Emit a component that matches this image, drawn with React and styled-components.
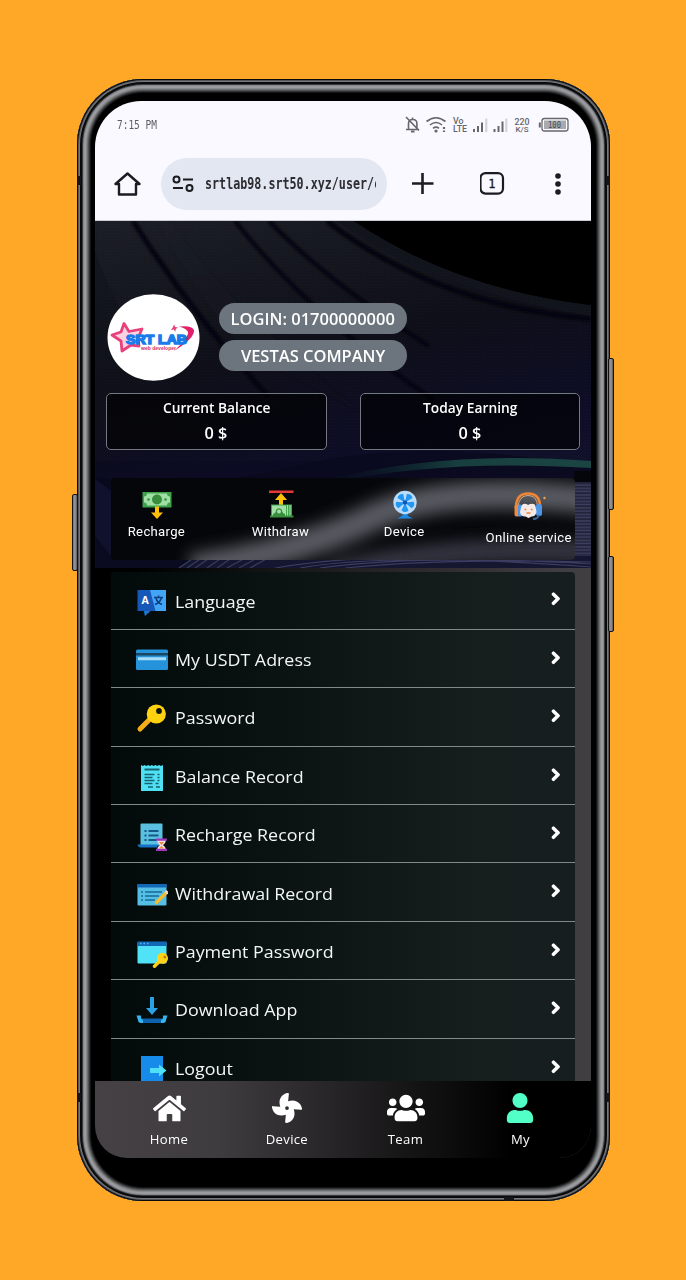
import React from "react";
import styled, { createGlobalStyle } from "styled-components";
import { FaChevronRight, FaFan, FaHome, FaUser, FaUsers } from "react-icons/fa";

const Global = createGlobalStyle`
  * { box-sizing: border-box; }
  body { margin: 0; background: #ffa726; font-family: "Open Sans", "Noto Sans", sans-serif; }
`;

const Page = styled.main`
  height: 1280px;
  padding: 79px 0 0 77px;
  background: #ffa726;
  overflow: hidden;
`;

const Phone = styled.div`
  position: relative;
  width: 533px;
  height: 1122px;
  padding: 22px 19px 43px 18px;
  border-radius: 66px;
  background: #000;
  box-shadow: inset 0 0 0 1px #0b0b0b, inset 0 0 0 2px #55565a, inset 0 0 0 3px #77787b,
    inset 0 0 0 5px #0a0a0b, inset 0 0 0 6px #3c3c40, inset 0 0 0 7px #85878a,
    inset 0 0 0 9px #9a9b9d, inset 0 0 0 10px #88898b, inset 0 0 0 11px #6d6e70,
    inset 0 0 0 12px #505153, inset 0 0 0 13px #303133, inset 0 0 0 14px #151515;
`;

const SideButton = styled.i`
  position: absolute;
  top: ${(p) => p.$top}px;
  ${(p) => p.$side}: ${(p) => (p.$side === "left" ? -5 : -4)}px;
  width: 6px;
  height: ${(p) => p.$height}px;
  border: 1px solid #151210;
  border-radius: 2px;
  background: linear-gradient(90deg, #77777b, #9a9a9d, #56565a);
`;

const AntennaGap = styled.i`
  position: absolute;
  background: #141517;
  top: ${(p) => p.$top}px;
  left: ${(p) => p.$left}px;
  width: ${(p) => p.$w || 4}px;
  height: ${(p) => p.$h || 9}px;
`;

const Screen = styled.div`
  display: flex;
  flex-direction: column;
  height: 1057px;
  overflow: hidden;
  border-radius: 46px 46px 32px 32px;
  background: linear-gradient(90deg, #000 0%, #000 8%, #413e41 94%, #413e41 100%);
`;

const Label = styled.span`
  display: inline-block;
  flex: none;
  color: ${(p) => p.$color || "#fff"};
  font-family: ${(p) => p.$font || '"Open Sans", "Noto Sans", sans-serif'};
  font-size: ${(p) => p.$size}px;
  font-weight: ${(p) => p.$weight || 400};
  line-height: ${(p) => p.$lh || 20}px;
  letter-spacing: ${(p) => p.$ls || 0}px;
  white-space: pre;
  transform: scaleX(${(p) => p.$sx || 1});
  transform-origin: ${(p) => p.$origin || "center"};
`;

const BrowserHeader = styled.header`
  flex: none;
  height: 120px;
  background: #faf9ff;
  border-bottom: 1px solid #c9cdd2;
`;

const StatusBar = styled.div`
  display: flex;
  align-items: center;
  justify-content: space-between;
  height: 48px;
  padding: 0 22px;
`;

const Toolbar = styled.div`
  display: flex;
  align-items: center;
  height: 69px;
  padding-left: 19px;
`;

const AddressBar = styled.div`
  display: flex;
  align-items: center;
  width: 226px;
  height: 52px;
  margin: 0 24px 0 19px;
  padding-left: 11px;
  border-radius: 26px;
  background: #e2e7f1;
`;

const UrlClip = styled.div`
  width: 171px;
  height: 24px;
  margin-left: 11px;
  overflow: hidden;
`;

const Hero = styled.section`
  position: relative;
  flex: none;
  height: 347px;
  padding: 73px 11px 0;
  isolation: isolate;
`;

const Backdrop = styled.svg`
  position: absolute;
  inset: 0;
  z-index: -1;
`;

const Profile = styled.div`
  display: flex;
  height: 87px;
  padding-left: 1px;
`;

const Pills = styled.div`
  display: flex;
  flex-direction: column;
  gap: 6px;
  margin: 9px 0 0 19px;
`;

const Pill = styled.div`
  display: flex;
  align-items: center;
  justify-content: center;
  width: 188px;
  height: 31px;
  border-radius: 16px;
  background: #6c757d;
`;

const Balances = styled.div`
  display: flex;
  justify-content: space-between;
  margin-top: 12px;
`;

const BalanceCard = styled.div`
  display: flex;
  flex-direction: column;
  align-items: center;
  width: 220.5px;
  height: 57px;
  padding-top: 4px;
  border: 1px solid #747881;
  border-radius: 5px;
  background: rgba(0, 0, 0, 0.6);
`;

const Shortcuts = styled.div`
  position: relative;
  height: 82px;
  margin: 28px 5px 0;
  border-radius: 4px;
  background: #050609;
`;

const Sheen = styled.svg`
  position: absolute;
  inset: 0;
  border-radius: 4px;
`;

const ShortcutGrid = styled.div`
  position: relative;
  display: grid;
  grid-template-columns: repeat(4, 124px);
  margin: 0 -16.5px;
  padding-top: 12px;
`;

const Shortcut = styled.div`
  display: flex;
  flex-direction: column;
  align-items: center;
  gap: ${(p) => p.$gap || 1}px;
`;

const Menu = styled.section`
  flex: 1;
  min-height: 0;
  margin: 3.5px 16.5px 0 16px;
  overflow: hidden;
  border-radius: 4px 4px 0 0;
  background: linear-gradient(90deg, #030a0a 0%, #0b1413 40%, #161f1e 80%, #161e1f 100%);
`;

const MenuRow = styled.div`
  display: flex;
  align-items: center;
  height: 58.4px;
  padding: 3px 12px 0 25px;
  border-bottom: 1px solid #838988;

  & > svg:first-child { flex: none; margin-right: 6.5px; }
`;

const Chevron = styled(FaChevronRight)`
  margin: -5px 0 0 auto;
  color: #fff;
  stroke: #fff;
  stroke-width: 50px;
  overflow: visible;
`;

const TabBar = styled.nav`
  display: flex;
  flex: none;
  height: 77px;
  padding: 12px 0 0 14px;
  background: linear-gradient(90deg, #454145 0%, #3f3c3f 25%, #000 84%);
`;

const Tab = styled.div`
  display: flex;
  flex-direction: column;
  align-items: center;
  gap: 6px;
  width: ${(p) => p.$w}px;
  color: ${(p) => p.$color || "#fff"};
`;

const MONO = '"DejaVu Sans Mono", monospace';
const ROBOTO = 'Roboto, "Open Sans", sans-serif';

function StatusIcons() {
  return (
    <svg width="164" height="20" viewBox="0 0 164 20" fill="none" stroke="#66666b">
      <g strokeWidth="1.6">
        <path d="M3.5 14V8.500q0-4 4.200-4t4.200 4V14M1 14.500h13M1 2l13 13.500M7.600 4.500V2.500" />
        <path d="M6 16.500h3.500" strokeWidth="2" />
        <path d="M21.500 6.500q9.500-7.500 19 0M25 10q6-5 12 0M28 13.300q3-2.500 6 0" />
      </g>
      <circle cx="31" cy="16" r="1.600" fill="#66666b" stroke="none" />
      <path d="M39 12v2M39 15.500v1.500" strokeWidth="2.200" />
      <g fill="#66666b" stroke="none" fontFamily="Roboto, sans-serif" fontWeight="500">
        <text x="48" y="8.500" fontSize="8.500" textLength="10.500" lengthAdjust="spacingAndGlyphs">Vo</text>
        <text x="48" y="17" fontSize="8.500" textLength="14" lengthAdjust="spacingAndGlyphs">LTE</text>
        <text x="109.500" y="9.500" fontSize="9" textLength="15" lengthAdjust="spacingAndGlyphs">220</text>
        <text x="110.500" y="17" fontSize="7" textLength="13" lengthAdjust="spacingAndGlyphs">K/S</text>
      </g>
      <g strokeWidth="2">
        <path d="M69 14v3M73 11v6M77 7.500v9.500M89.500 14v3M93.500 11v6M97.500 6.500v10.500" />
        <path d="M81.300 3.500v13.500M101.300 3.500v13.500" stroke="#d0d0d5" />
      </g>
      <rect x="137" y="3.500" width="26" height="12.500" rx="2.500" strokeWidth="1.300" />
      <rect x="139" y="5.500" width="22" height="8.500" fill="#aaaaae" stroke="none" />
      <path d="M134.800 7.500v5" strokeWidth="2" />
      <text x="143" y="13" fontSize="9" textLength="13" lengthAdjust="spacingAndGlyphs" fill="#4c4c50" stroke="none" fontFamily="DejaVu Sans Mono, monospace">100</text>
    </svg>
  );
}

const ToolbarIcon = styled.svg`
  flex: none;
  margin-right: ${(p) => p.$mr || 0}px;
  fill: none;
  stroke: #1b1b20;
`;

function Browser() {
  return (
    <BrowserHeader>
      <StatusBar>
        <Label $font={MONO} $size={12} $sx={0.79} $origin="left" $color="#5c5c62">7:15 PM</Label>
        <StatusIcons />
      </StatusBar>
      <Toolbar>
        <ToolbarIcon width="28" height="28" viewBox="0 0 28 28" strokeWidth="2.400">
          <path d="M1.500 14h3.500V24.500h17V14h3.500L13.500 3.500z" strokeLinejoin="round" />
        </ToolbarIcon>
        <AddressBar>
          <svg width="22" height="18" viewBox="0 0 22 18" fill="none" stroke="#1b1b20" strokeWidth="2">
            <circle cx="4.500" cy="4.500" r="3" />
            <circle cx="17.500" cy="13" r="3" />
            <path d="M11 4.500h10M1 13h10" />
          </svg>
          <UrlClip>
            <Label $font={MONO} $size={15} $weight={700} $sx={0.78} $lh={24} $origin="left" $color="#2c2c31">
              srtlab98.srt50.xyz/user/c
            </Label>
          </UrlClip>
        </AddressBar>
        <ToolbarIcon $mr={45} width="24" height="24" viewBox="0 0 24 24" strokeWidth="2.600">
          <path d="M1 11.500h21.500M11.500 1v21" />
        </ToolbarIcon>
        <ToolbarIcon $mr={48} width="26" height="24" viewBox="0 0 26 24" strokeWidth="2.200">
          <rect x="0.500" y="1.100" width="22.500" height="20.500" rx="5" />
          <text x="8.200" y="15.800" fontSize="12" fontFamily="DejaVu Sans Mono, monospace" fill="#1b1b20" stroke="#1b1b20" strokeWidth="0.300">1</text>
        </ToolbarIcon>
        <ToolbarIcon width="8" height="22" viewBox="0 0 8 22">
          <g fill="#1b1b20" stroke="none">
            <circle cx="4" cy="3" r="2.800" />
            <circle cx="4" cy="11" r="2.800" />
            <circle cx="4" cy="19" r="2.800" />
          </g>
        </ToolbarIcon>
      </Toolbar>
    </BrowserHeader>
  );
}

function HeroBackdrop() {
  return (
    <Backdrop width="496" height="347" viewBox="0 0 496 347">
      <defs>
        <linearGradient id="base" x1="0" y1="0" x2="0.300" y2="1">
          <stop offset="0" stopColor="#1a1d25" />
          <stop offset="0.450" stopColor="#0c0d16" />
          <stop offset="0.750" stopColor="#0b0b24" />
          <stop offset="1" stopColor="#11112c" />
        </linearGradient>
        <linearGradient id="stripe" x1="0" y1="0" x2="0" y2="1">
          <stop offset="0" stopColor="#1b1e27" />
          <stop offset="1" stopColor="#0c0d18" />
        </linearGradient>
        <linearGradient id="green" x1="0" y1="0" x2="1" y2="0">
          <stop offset="0" stopColor="#0a2026" stopOpacity="0" />
          <stop offset="0.500" stopColor="#173f3f" />
          <stop offset="1" stopColor="#1b4542" />
        </linearGradient>
        <pattern id="mesh" width="3" height="3" patternUnits="userSpaceOnUse">
          <path d="M0 0h1v1H0zM1.500 1.500h1v1h-1z" fill="#7b8296" fillOpacity="0.080" />
        </pattern>
        <pattern id="grooves" width="40" height="6.500" patternUnits="userSpaceOnUse">
          <path d="M0 1h40M0 4h40" stroke="#4b4d70" strokeWidth="1" />
        </pattern>
        <filter id="soft"><feGaussianBlur stdDeviation="1.500" /></filter>
      </defs>
      <rect width="496" height="347" fill="url(#base)" />
      <path d="M0 30q30 90 120 190H0z" fill="#0e1018" opacity="0.500" />
      <path d="M75 0q55 85 190 190L150 130Q100 70 62 0z" fill="url(#stripe)" opacity="0.400" filter="url(#soft)" />
      <path d="M38 0q60 95 135 175" fill="none" stroke="#050609" strokeWidth="5" filter="url(#soft)" />
      <path d="M140 0q75 95 200 180" fill="none" stroke="#04050a" strokeWidth="4" filter="url(#soft)" />
      <path d="M174 0q60 62 160 125" fill="none" stroke="#05060a" strokeWidth="4" filter="url(#soft)" />
      <path d="M232 0Q340 84 496 98" fill="none" stroke="#030407" strokeWidth="5" filter="url(#soft)" />
      <path d="M241 0Q335 68 496 95V0z" fill="#10121a" />
      <path d="M259 0Q360 68 496 84V0z" fill="#000" />
      <rect width="496" height="240" fill="url(#mesh)" />
      <path d="M259 0Q360 68 496 84V0z" fill="#000" />
      <path d="M0 255q80 20 200-10t296 0v102H0z" fill="#08081d" opacity="0.700" />
      <path d="M0 258l16 12v65L0 315z" fill="#10112d" />
      <path d="M230 259Q350 229 496 240v7Q350 238 240 261z" fill="url(#green)" />
      <path d="M479 250h17v12h-17z" fill="#05060a" />
      <rect x="478" y="261" width="18" height="86" fill="#23243b" />
      <rect x="478" y="263" width="18" height="84" fill="url(#grooves)" />
      <path d="M82 347l18-12h396v12z" fill="#15162f" />
      <g fill="none" stroke="#3a3c60" strokeWidth="1.200">
        <path d="M84 347l16-11M92 347l16-11M100 347l16-11M112 347l16-11M122 347l16-11M132 347l20-11M144 347l20-11M155 347l20-11" />
        <path d="M205 347q90-16 291-1M225 347q100-14 271-4M250 347q100-10 246-6M180 347q80-14 210-10" />
      </g>
    </Backdrop>
  );
}

function PanelSheen() {
  return (
    <Sheen width="464" height="82" viewBox="0 0 464 82">
      <defs>
        <filter id="haze" x="-20%" y="-60%" width="140%" height="220%">
          <feGaussianBlur stdDeviation="8" />
        </filter>
      </defs>
      <g fill="none" filter="url(#haze)">
        <path d="M80 90Q190 74 260 40T480 22" stroke="#5a5c64" strokeWidth="28" />
        <path d="M220 96Q330 66 490 74" stroke="#383944" strokeWidth="22" />
      </g>
    </Sheen>
  );
}

function Avatar() {
  return (
    <svg width="93" height="87" viewBox="0 0 93 87">
      <ellipse cx="46.500" cy="43.500" rx="46" ry="43.300" fill="#fff" />
      <path d="M17 29.500l5 8 13-2.500-4 9 1 8-8-1-9 6-1-10-9-6 9-3z" fill="#fbd3e0" stroke="#e8407c" strokeWidth="2.800" strokeLinejoin="round" />
      <path d="M72 32.500q13-1.500 15 3.500 1 8-20 21 15-14 14-19-2-4-9-5.500z" fill="#e2206c" />
      <path d="M67 30.500l1.200 2.500 2.800.500-2.200 1.500-.500 3-1.500-2.500-3 .500 2-2.500z" fill="#e8407c" />
      <text x="19" y="50" fontFamily="Liberation Sans, sans-serif" fontWeight="700" fontSize="12.500" textLength="61" lengthAdjust="spacingAndGlyphs" fill="#1b7bea" stroke="#1b7bea" strokeWidth="1.500">SRT LAB</text>
      <text x="34" y="55.500" fontFamily="Liberation Sans, sans-serif" fontWeight="700" fontSize="4.800" textLength="35" lengthAdjust="spacingAndGlyphs" fill="#d5305f">web developer</text>
    </svg>
  );
}

function ShortcutIcon({ kind }) {
  return (
    <svg width="34" height="31" viewBox="0 0 34 31">
      {kind === "recharge" && (
        <g>
          <path d="M2.500 2h29v15.500h-29z" fill="#3fa24a" />
          <path d="M7 3.500h20a3 3 0 0 0 3 3v6a3 3 0 0 0-3 3H7a3 3 0 0 0-3-3v-6a3 3 0 0 0 3-3z" fill="#a0dfa3" />
          <circle cx="17" cy="9.500" r="5" fill="#388e3c" />
          <circle cx="8.500" cy="9.500" r="1.300" fill="#388e3c" />
          <circle cx="25.500" cy="9.500" r="1.300" fill="#388e3c" />
          <path d="M15 16.500h4v6h4L17 29l-6-6.500h4z" fill="#ffc107" />
        </g>
      )}
      {kind === "withdraw" && (
        <g>
          <path d="M5 0.500h24.500V3H5z" fill="#e53935" />
          <path d="M17 3l6 7h-4v5h-4v-5h-4z" fill="#ffc107" />
          <path d="M7 14.500h21V27H7z" fill="#3fa24a" />
          <path d="M8 15.500h14v10.500H8z" fill="#a5dfa8" />
          <path d="M9 26v-2q3-1 3-4a3.500 3.500 0 0 1 6 0q0 3 3 4v2z" fill="#388e3c" />
          <circle cx="15" cy="21.500" r="2" fill="#a5dfa8" />
          <path d="M23.500 15v11M26 15v11" stroke="#a5dfa8" strokeWidth="1.100" />
          <path d="M6 25.500h23.500v2H6z" fill="#388e3c" />
        </g>
      )}
      {kind === "device" && (
        <g>
          <path d="M15 23h4l1 3 5 2.500H9l5-2.500z" fill="#1e88e5" />
          <circle cx="17" cy="12.500" r="11.700" fill="#b9dcfa" />
          <g fill="#2196f3">
            {[0, 72, 144, 216, 288].map((a) => (
              <path key={a} d="M17 12.500L13.500 4.500q3.500-3 7 0z" transform={"rotate(" + (a + 36) + " 17 12.500)"} />
            ))}
          </g>
          <circle cx="17" cy="12.500" r="2.200" fill="#1254b0" />
        </g>
      )}
      {kind === "service" && (
        <g>
          <path d="M4 18Q4 3.500 16 3.500T28 17" fill="none" stroke="#ef8632" strokeWidth="2.600" />
          <path d="M6 17Q7 5.500 16 5.500T25.500 16" fill="none" stroke="#f7c08c" strokeWidth="0.800" />
          <rect x="2.500" y="14.500" width="5" height="12" rx="2" fill="#f08a3c" />
          <rect x="24" y="14" width="6" height="12" rx="2.500" fill="#4c96e8" />
          <rect x="6" y="14.500" width="4" height="12" rx="1.500" fill="#4c96e8" />
          <path d="M9.500 16q1-3 5-2l1.500 1 2-1q5-1 5.500 2l1 6q-1 4.500-5 4.500l-3 1.500-3-1.500q-5 0-5.500-4.500z" fill="#f3eae8" />
          <path d="M12.500 19.500h1.800M18.800 19.500h1.800M14.500 23h4" stroke="#ee8038" strokeWidth="1.500" />
          <path d="M27 25q-1 4-6 4" fill="none" stroke="#3768ad" strokeWidth="1.800" />
          <path d="M28.500 5l3.500-2.500" stroke="#3f5a7a" strokeWidth="1.300" />
          <circle cx="32.500" cy="8" r="1.200" fill="#f0a04a" />
        </g>
      )}
    </svg>
  );
}

function MenuIcon({ kind }) {
  return (
    <svg width="32" height="32" viewBox="0 0 32 32">
      {kind === "language" && (
        <g>
          <path d="M13 4h17v21H19z" fill="#42a5f5" />
          <path d="M1.500 4H14l5.500 21h-7L9 30l-1-5H1.500z" fill="#1558b8" />
          <path d="M8 25h6.500L9 30z" fill="#1976d2" />
          <text x="5.500" y="18" fontSize="10.500" fontWeight="700" fontFamily="Open Sans, sans-serif" fill="#fff">A</text>
          <path d="M18 11.500h9M22.500 9.500v2M19 18.500q5.500-2 6.500-7M20 12q1 4.500 6 6.500" fill="none" stroke="#0f3f82" strokeWidth="1.500" />
        </g>
      )}
      {kind === "card" && (
        <g>
          <rect x="0" y="5.500" width="32" height="20.500" rx="1.500" fill="#2593dc" />
          <path d="M0 9h32v2.500H0z" fill="#1c4560" />
          <path d="M2 13.300h28v3H2z" fill="#a8dcf7" />
        </g>
      )}
      {kind === "key" && (
        <g>
          <path d="M4 27L15 16" stroke="#f2ae14" strokeWidth="5" strokeLinecap="round" />
          <circle cx="20.300" cy="12" r="9.600" fill="#ffd210" />
          <circle cx="23" cy="9" r="2.900" fill="#101510" />
        </g>
      )}
      {kind === "receipt" && (
        <g>
          <path d="M5 4l1.800 1L8.600 4l1.800 1L12.200 4 14 5l1.800-1 1.800 1 1.800-1 1.800 1L23 4l2 1 2-1v26H5z" fill="#50e0f4" />
          <path d="M8.500 8.500h15" stroke="#15616f" strokeWidth="2" />
          <path d="M8.500 13.500h10M8.500 16.500h8M8.500 19.500h10M8.500 22.500h8M12 26h5M21.500 13.500h2M21.500 16.500h2M21.500 19.500h2M19.500 22.500h3M20 26h4" stroke="#15616f" strokeWidth="1.500" />
        </g>
      )}
      {kind === "history" && (
        <g>
          <rect x="4.500" y="4.500" width="22" height="22" rx="1" fill="#5bbfe0" />
          <path d="M1.500 25.500h20v3H5q-3 0-3.500-3z" fill="#1773c5" />
          <path d="M8.500 12h2M12.500 12h10M8.500 16.500h2M12.500 16.500h10M8.500 21h2M12.500 21h8" stroke="#145a88" strokeWidth="1.800" />
          <path d="M21 20h9q0 4-3 6 3 2 3 6h-9q0-4 3-6-3-2-3-6z" fill="#f3dbe6" />
          <path d="M20 19.500h11v2.200H20zM20 29.800h11V32H20z" fill="#9936bb" />
          <path d="M23 23h5l-2.500 3zM23 29.500l2.500-2.500 2.500 2.500z" fill="#f08a30" />
        </g>
      )}
      {kind === "form" && (
        <g>
          <rect x="1.500" y="6" width="29" height="21.500" rx="1" fill="#55bee4" />
          <path d="M1.500 6h29v3.500h-29z" fill="#1268b6" />
          <path d="M5 14h2M5 18h2M5 22h2M9 14h17M9 18h14M9 22h10" stroke="#176b98" strokeWidth="1.400" />
          <path d="M19.500 25.500L31 14" stroke="#f4bb2c" strokeWidth="3.200" />
          <path d="M29.500 13l2.500 2.500" stroke="#f0d1cb" strokeWidth="3" />
        </g>
      )}
      {kind === "window" && (
        <g>
          <rect x="1.500" y="6" width="29" height="21.500" rx="1" fill="#50e3f7" />
          <path d="M1.500 5.500h29v4.500h-29z" fill="#1268b6" />
          <path d="M4 7.500h1.500M7.500 7.500H9M11 7.500h1.500" stroke="#58b8f0" strokeWidth="1.500" />
          <path d="M18.500 30.200l7-7" stroke="#ffcf12" strokeWidth="3.400" strokeLinecap="round" />
          <circle cx="26.500" cy="22.300" r="5.500" fill="#ffd21a" />
          <circle cx="28.800" cy="21" r="1.500" fill="#bd8510" />
        </g>
      )}
      {kind === "download" && (
        <g>
          <path d="M14 3h4v11h4L16 21l-6-7h4z" fill="#2ba1e5" />
          <path d="M4 24.500h23.500v4.500H6z" fill="#0d62ad" />
          <path d="M0.500 21.500H5v3L7 26v3H5q-3 0-3-3zM31.500 21.500H27v3L25 26v3h2q3 0 3-3z" fill="#35b4ee" />
        </g>
      )}
      {kind === "logout" && (
        <g>
          <path d="M5 3h22v29H5z" fill="#168bea" />
          <path d="M14 15h9v-3.500l7.500 6-7.500 6V20h-9z" fill="#4fe0f5" />
        </g>
      )}
    </svg>
  );
}

const shortcuts = [
  { kind: "recharge", label: "Recharge" },
  { kind: "withdraw", label: "Withdraw" },
  { kind: "device", label: "Device" },
  { kind: "service", label: "Online service", gap: 6.5 },
];

const menu = [
  ["language", "Language"],
  ["card", "My USDT Adress"],
  ["key", "Password"],
  ["receipt", "Balance Record"],
  ["history", "Recharge Record"],
  ["form", "Withdrawal Record"],
  ["window", "Payment Password"],
  ["download", "Download App"],
  ["logout", "Logout"],
];

const tabs = [
  { label: "Home", Icon: FaHome, w: 120, size: 33 },
  { label: "Device", Icon: FaFan, w: 115, size: 30 },
  { label: "Team", Icon: FaUsers, w: 123, size: 38 },
  { label: "My", Icon: FaUser, w: 106, size: 30, color: "#52ffc6" },
];

const TabIcon = styled.span`
  display: flex;
  align-items: center;
  justify-content: center;
  height: 30px;
`;

export default function App() {
  return (
    <Page>
      <Global />
      <Phone>
        <SideButton $side="left" $top={415} $height={77} />
        <SideButton $side="right" $top={279} $height={152} />
        <SideButton $side="right" $top={477} $height={76} />
        <AntennaGap $left={0} $top={97} />
        <AntennaGap $left={529} $top={97} />
        <AntennaGap $left={0} $top={1014} />
        <AntennaGap $left={529} $top={1014} />
        <AntennaGap $left={427} $top={1118} $w={10} $h={4} />
        <Screen>
          <Browser />
          <Hero>
            <HeroBackdrop />
            <Profile>
              <Avatar />
              <Pills>
                <Pill><Label $size={16} $weight={600} $sx={1.03}>LOGIN: 01700000000</Label></Pill>
                <Pill><Label $size={16} $weight={600} $sx={1.03}>VESTAS COMPANY</Label></Pill>
              </Pills>
            </Profile>
            <Balances>
              {["Current Balance", "Today Earning"].map((title) => (
                <BalanceCard key={title}>
                  <Label $size={13.5} $weight={600} $sx={1.02}>{title}</Label>
                  <Label $size={15.5} $weight={600} $sx={1.05} $lh={30}>0 $</Label>
                </BalanceCard>
              ))}
            </Balances>
            <Shortcuts>
              <PanelSheen />
              <ShortcutGrid>
                {shortcuts.map((s) => (
                  <Shortcut key={s.kind} $gap={s.gap}>
                    <ShortcutIcon kind={s.kind} />
                    <Label $font={ROBOTO} $size={13} $ls={0.3} $sx={1.01}>{s.label}</Label>
                  </Shortcut>
                ))}
              </ShortcutGrid>
            </Shortcuts>
          </Hero>
          <Menu>
            {menu.map(([kind, label]) => (
              <MenuRow key={kind}>
                <MenuIcon kind={kind} />
                <Label $size={17} $sx={1.05} $origin="left" $lh={24} $color="#f4f6f6">{label}</Label>
                <Chevron size={13.5} />
              </MenuRow>
            ))}
          </Menu>
          <TabBar>
            {tabs.map(({ label, Icon, w, size, color }) => (
              <Tab key={label} $w={w} $color={color}>
                <TabIcon><Icon size={size} /></TabIcon>
                <Label $size={13} $ls={0.3} $sx={1.01}>{label}</Label>
              </Tab>
            ))}
          </TabBar>
        </Screen>
      </Phone>
    </Page>
  );
}
